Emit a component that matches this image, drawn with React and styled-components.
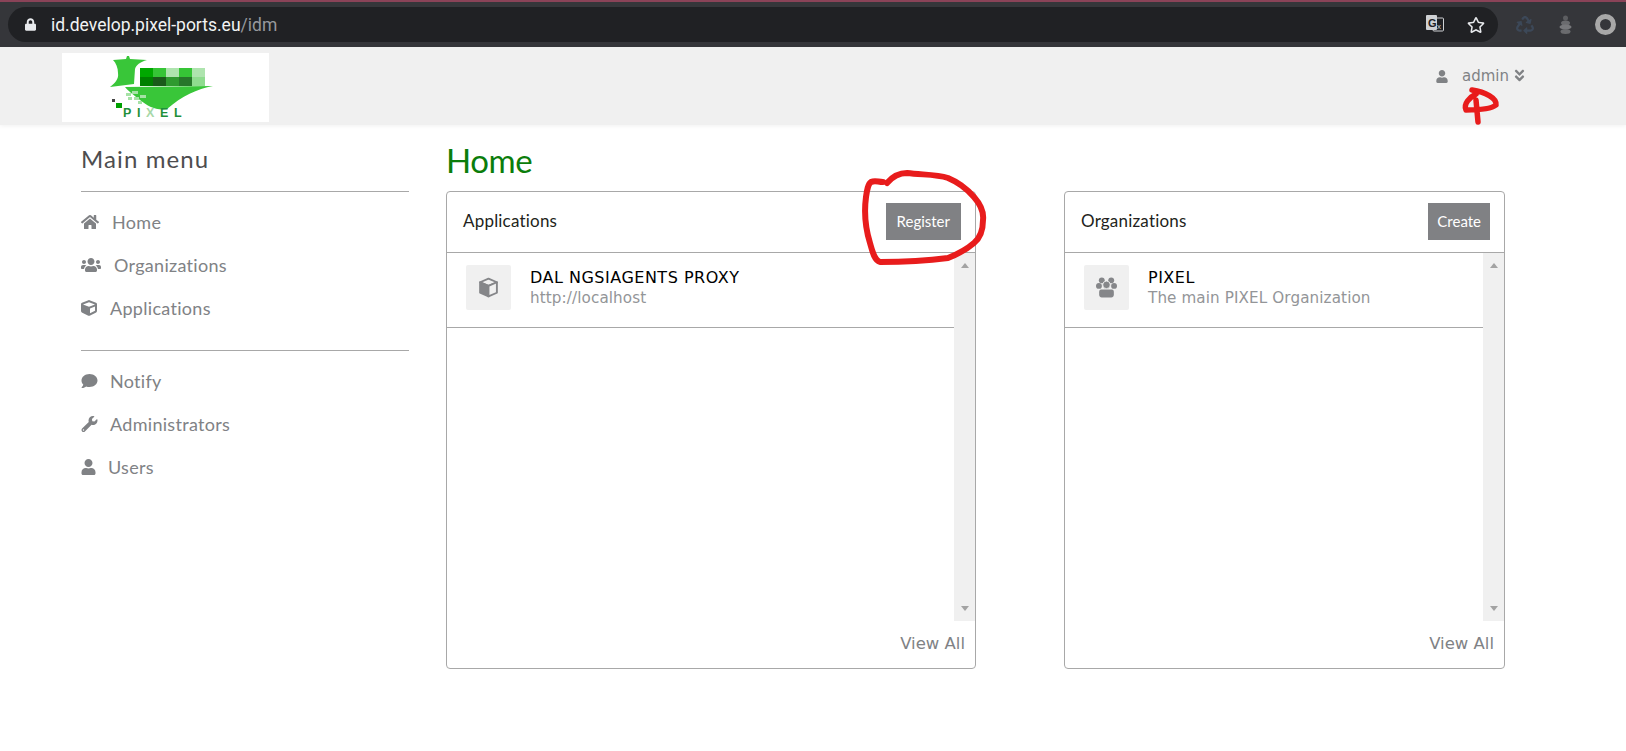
import React from 'react';
import styled, { createGlobalStyle } from 'styled-components';
import {
  FaAngleDoubleDown,
  FaComment,
  FaCube,
  FaHome,
  FaLock,
  FaRecycle,
  FaRegStar,
  FaUser,
  FaUsers,
  FaWrench,
} from 'react-icons/fa';

const GlobalStyle = createGlobalStyle`
  html, body {
    margin: 0;
    padding: 0;
    background: #fff;
    overflow: hidden;
  }
`;

const Page = styled.div`
  position: relative;
  width: 1626px;
  height: 751px;
  overflow: hidden;
  font-family: "Lato", "Liberation Sans", sans-serif;
`;

const Chrome = styled.div`
  height: 45px;
  background: #35363a;
  border-top: 2px solid #8a4358;
  display: flex;
  align-items: center;
  padding: 0 10px 0 8px;
`;

const UrlPill = styled.div`
  width: 1490px;
  height: 35px;
  box-sizing: border-box;
  background: #202124;
  border-radius: 18px;
  display: flex;
  align-items: center;
  padding: 0 13px 0 17px;
  color: #e8eaed;
  font-family: "Roboto", sans-serif;
  font-size: 17.5px;
`;

const LockIcon = styled(FaLock)`
  width: 11px;
  height: 13px;
  margin-right: 15px;
  color: #e8eaed;
`;

const Host = styled.span`
  color: #f1f3f4;
`;

const Path = styled.span`
  color: #96989c;
  flex: 1;
`;

const Translate = styled.svg`
  width: 18px;
  height: 19px;
  margin-right: 23px;
`;

const Star = styled(FaRegStar)`
  width: 18px;
  height: 18px;
  color: #e8eaed;
`;

const Extensions = styled.div`
  display: flex;
  align-items: center;
  margin-left: 18px;
`;

const Recycle = styled(FaRecycle)`
  width: 18px;
  height: 18px;
  color: #3c4858;
  margin-right: 25px;
`;

const Stack = styled.svg`
  width: 13px;
  height: 20px;
  margin-right: 23px;
`;

const Ring = styled.div`
  width: 21px;
  height: 21px;
  box-sizing: border-box;
  border: 5px solid #a8a8a8;
  border-radius: 50%;
`;

const Header = styled.header`
  height: 78px;
  box-sizing: border-box;
  background: #f0f0f0;
  box-shadow: 0 1px 4px rgba(0, 0, 0, 0.06);
  display: flex;
  align-items: flex-start;
  justify-content: space-between;
  padding: 6px 100px 0 62px;
`;

const Logo = styled.svg`
  width: 207px;
  height: 69px;
  background: #fff;
  display: block;
`;

const UserMenu = styled.div`
  display: flex;
  align-items: center;
  margin-top: 14px;
  color: #808285;
  font-family: "DejaVu Sans", sans-serif;
  font-size: 15px;
`;

const UserIcon = styled(FaUser)`
  width: 12px;
  height: 13px;
  margin-right: 14px;
`;

const Chevrons = styled(FaAngleDoubleDown)`
  width: 13px;
  height: 15px;
  margin-left: 4px;
  margin-top: -2px;
`;

const Content = styled.div`
  display: flex;
  padding: 14px 0 0 81px;
`;

const Sidebar = styled.nav`
  width: 328px;
  margin-right: 37px;
`;

const SideTitle = styled.h2`
  margin: 0;
  height: 53px;
  box-sizing: border-box;
  padding-top: 5px;
  border-bottom: 1px solid #a8a8a8;
  font-size: 24px;
  line-height: 30px;
  font-weight: 400;
  letter-spacing: 1.1px;
  color: #4d4d4f;
`;

const MenuGroup = styled.ul`
  list-style: none;
  margin: 0;
  padding: 8px 0 0;
  height: 159px;
  box-sizing: border-box;
  border-bottom: ${(p) => (p.$last ? 'none' : '1px solid #a8a8a8')};
`;

const MenuItem = styled.li`
  height: 43px;
  display: flex;
  align-items: center;
  color: #808285;
  font-size: 18px;
  letter-spacing: 0.3px;
  svg {
    width: ${(p) => p.$icon}px;
    height: 16px;
    margin-right: ${(p) => p.$gap}px;
    flex-shrink: 0;
  }
`;

const Main = styled.main`
  display: flex;
  flex-direction: column;
`;

const Title = styled.h1`
  margin: 0;
  height: 52px;
  padding-top: 1px;
  box-sizing: border-box;
  font-size: 33px;
  line-height: 40px;
  font-weight: 400;
  letter-spacing: -0.4px;
  color: #0b7d0b;
`;

const Cards = styled.div`
  display: flex;
  gap: 88px;
`;

const Card = styled.section`
  width: ${(p) => p.$width}px;
  height: 478px;
  box-sizing: border-box;
  border: 1px solid #a8a8a8;
  border-radius: 4px;
  display: flex;
  flex-direction: column;
`;

const CardHeader = styled.div`
  height: 61px;
  flex-shrink: 0;
  box-sizing: border-box;
  border-bottom: 1px solid #a8a8a8;
  display: flex;
  align-items: center;
  justify-content: space-between;
  padding: 0 14px 0 16px;
`;

const CardTitle = styled.h3`
  margin: 0 0 3px;
  font-size: 17px;
  font-weight: 400;
  letter-spacing: 0.2px;
  color: #231f20;
`;

const ActionButton = styled.button`
  height: 37px;
  margin-top: -2px;
  padding: 0 ${(p) => p.$pad}px;
  border: none;
  background: #808184;
  color: #fff;
  font-family: "Lato", sans-serif;
  font-size: 15px;
`;

const CardBody = styled.div`
  height: 368px;
  flex-shrink: 0;
  display: flex;
`;

const List = styled.div`
  flex: 1;
`;

const Row = styled.div`
  height: 75px;
  box-sizing: border-box;
  border-bottom: 1px solid #a8a8a8;
  display: flex;
  align-items: flex-start;
  padding: 12px 0 0 19px;
`;

const IconBox = styled.div`
  width: 45px;
  height: 45px;
  background: #f0f0f0;
  border-radius: 2px;
  display: flex;
  align-items: center;
  justify-content: center;
  margin-right: 19px;
`;

const BoxGlyph = styled.svg`
  width: 21px;
  height: 21px;
`;

const RowText = styled.div`
  font-family: "DejaVu Sans", sans-serif;
`;

const RowName = styled.div`
  font-size: 16px;
  line-height: 21px;
  margin-top: 2px;
  letter-spacing: 0.5px;
  font-weight: 400;
  color: #000;
`;

const RowSub = styled.div`
  font-size: 15.2px;
  line-height: 21px;
  color: #939598;
  letter-spacing: 0.1px;
`;

const Scrollbar = styled.div`
  width: 21px;
  background: #f0f0f0;
  display: flex;
  flex-direction: column;
  align-items: center;
  justify-content: space-between;
  padding: 10px 0;
  box-sizing: border-box;
`;

const ScrollArrow = styled.div`
  width: 0;
  height: 0;
  border-left: 4px solid transparent;
  border-right: 4px solid transparent;
  border-${(p) => (p.$down ? 'top' : 'bottom')}: 5px solid #a3a3a3;
`;

const CardFooter = styled.div`
  flex: 1;
  display: flex;
  justify-content: flex-end;
  padding: 13px 10px 0 0;
  font-family: "DejaVu Sans", sans-serif;
  font-size: 16.5px;
  color: #808285;
`;

const Scribble = styled.svg`
  position: absolute;
  left: 0;
  top: 0;
  width: 1626px;
  height: 751px;
  pointer-events: none;
`;

const LOGO_PIXELS = [
  ['#00a800', '#36c536', '#aee4ae', '#36c536', '#aee4ae'],
  ['#007f00', '#1a5a1a', '#2f9a2f', '#27772a', '#8fdc8f'],
];

const LOGO_SPECKS = [
  [64, 40, 5, 3],
  [70, 38, 6, 3],
  [66, 44, 4, 3],
  [72, 44, 5, 3],
  [78, 42, 6, 3],
  [76, 48, 4, 3],
];

function PixelLogo() {
  return (
    <Logo viewBox="0 0 207 69">
      <path
        d="M51 7 L64 6 L65 3 L67 3 L68 6 L85 7 C78 9 74 12 73 16 L72 31 L48 34 C53 30 57 26 56 20 C56 15 54 10 51 7 Z"
        fill="#39c639"
      />
      <path d="M63 34 L151 33 C135 36 120 43 105 56 C95 58 85 53 78 47 C72 42 66 38 63 34 Z" fill="#39c639" />
      {LOGO_SPECKS.map(([x, y, w, h]) => (
        <rect key={`${x}-${y}`} x={x} y={y} width={w} height={h} fill="#a6e2a6" />
      ))}
      {LOGO_PIXELS.map((row, y) =>
        row.map((color, x) => (
          <rect key={`${x}-${y}`} x={78 + x * 13} y={15 + y * 9} width="13" height="9" fill={color} />
        ))
      )}
      <rect x="50" y="46" width="3" height="3" fill="#444" />
      <rect x="54" y="50" width="6" height="5" fill="#00a000" />
      <text x="61" y="64" fontFamily="Liberation Sans" fontSize="12.5" fontWeight="700" letterSpacing="5.6" fill="#1f8f3a">
        PI<tspan fill="#a8d8a8">X</tspan>EL
      </text>
    </Logo>
  );
}

function TranslateIcon() {
  return (
    <Translate viewBox="0 0 18 19">
      <rect x="7" y="3" width="10.5" height="13" rx="1" fill="none" stroke="#cfd1d4" />
      <rect x="0" y="0" width="11" height="15" rx="1" fill="#cfd1d4" />
      <text x="2" y="12" fontFamily="Liberation Sans" fontSize="11" fontWeight="700" fill="#202124">G</text>
      <text x="11" y="14" fontFamily="Liberation Sans" fontSize="8" fill="#cfd1d4">x</text>
    </Translate>
  );
}

function CubeGlyph() {
  return (
    <BoxGlyph viewBox="0 0 20 20" strokeLinejoin="round">
      <path d="M10 1.5 L18 5 L10 8.5 L2 5 Z" fill="#f0f0f0" stroke="#858689" strokeWidth="1.8" />
      <path d="M2 5 L10 8.5 V18.5 L2 15 Z" fill="#858689" stroke="#858689" strokeWidth="1.8" />
      <path d="M18 5 L10 8.5 V18.5 L18 15 Z" fill="#f0f0f0" stroke="#858689" strokeWidth="1.8" />
    </BoxGlyph>
  );
}

function GroupGlyph() {
  return (
    <BoxGlyph viewBox="0 0 20 20" fill="#858689">
      <circle cx="5.5" cy="3.2" r="2.8" />
      <circle cx="14.5" cy="3.2" r="2.8" />
      <circle cx="2.8" cy="8.5" r="2.8" />
      <circle cx="17.2" cy="8.5" r="2.8" />
      <circle cx="10" cy="7.5" r="3.6" stroke="#f0f0f0" strokeWidth="0.8" />
      <path d="M5 12 H15 C16.5 12 17 13 17 14.5 V17 C17 18.6 16 19.5 14.5 19.5 H5.5 C4 19.5 3 18.6 3 17 V14.5 C3 13 3.5 12 5 12 Z" />
    </BoxGlyph>
  );
}

function CardPanel({ width, title, action, pad, icon, name, sub }) {
  return (
    <Card $width={width}>
      <CardHeader>
        <CardTitle>{title}</CardTitle>
        <ActionButton $pad={pad}>{action}</ActionButton>
      </CardHeader>
      <CardBody>
        <List>
          <Row>
            <IconBox>{icon}</IconBox>
            <RowText>
              <RowName>{name}</RowName>
              <RowSub>{sub}</RowSub>
            </RowText>
          </Row>
        </List>
        <Scrollbar>
          <ScrollArrow />
          <ScrollArrow $down />
        </Scrollbar>
      </CardBody>
      <CardFooter>View All</CardFooter>
    </Card>
  );
}

export default function App() {
  return (
    <Page>
      <GlobalStyle />
      <Chrome>
        <UrlPill>
          <LockIcon />
          <Host>id.develop.pixel-ports.eu</Host>
          <Path>/idm</Path>
          <TranslateIcon />
          <Star />
        </UrlPill>
        <Extensions>
          <Recycle />
          <Stack viewBox="0 0 13 20">
            <circle cx="6.5" cy="3" r="2.5" fill="#5c5d60" />
            <ellipse cx="6.5" cy="8" rx="4.5" ry="2.5" fill="#6a6b6e" />
            <ellipse cx="6.5" cy="12" rx="6" ry="2.5" fill="#77787b" />
            <ellipse cx="6.5" cy="16.5" rx="5" ry="2.5" fill="#6a6b6e" />
          </Stack>
          <Ring />
        </Extensions>
      </Chrome>
      <Header>
        <PixelLogo />
        <UserMenu>
          <UserIcon />
          admin
          <Chevrons />
        </UserMenu>
      </Header>
      <Content>
        <Sidebar>
          <SideTitle>Main menu</SideTitle>
          <MenuGroup>
            <MenuItem $icon={18} $gap={13}><FaHome />Home</MenuItem>
            <MenuItem $icon={20} $gap={13}><FaUsers />Organizations</MenuItem>
            <MenuItem $icon={16} $gap={13}><FaCube />Applications</MenuItem>
          </MenuGroup>
          <MenuGroup $last>
            <MenuItem $icon={17} $gap={12}><FaComment />Notify</MenuItem>
            <MenuItem $icon={17} $gap={12}><FaWrench />Administrators</MenuItem>
            <MenuItem $icon={15} $gap={12}><FaUser />Users</MenuItem>
          </MenuGroup>
        </Sidebar>
        <Main>
          <Title>Home</Title>
          <Cards>
            <CardPanel
              width={530}
              title="Applications"
              action="Register"
              pad={11}
              icon={<CubeGlyph />}
              name="DAL NGSIAGENTS PROXY"
              sub="http://localhost"
            />
            <CardPanel
              width={441}
              title="Organizations"
              action="Create"
              pad={9}
              icon={<GroupGlyph />}
              name="PIXEL"
              sub="The main PIXEL Organization"
            />
          </Cards>
        </Main>
      </Content>
      <Scribble viewBox="0 0 1626 751" fill="none" stroke="#e81c1c" strokeLinecap="round" strokeLinejoin="round">
        <path
          strokeWidth="6"
          d="M887 183 C893 176 900 173 907 173 C922 175 936 174 948 178 C960 183 968 190 974 197 C981 205 984 212 983 220 C983 231 980 238 974 243 C966 250 958 254 948 258 C925 261 900 262 880 262 C874 260 872 250 870 243 C866 230 864 212 866 197 C867 190 868 184 871 182 C875 180 878 182 883 182"
        />
        <path
          strokeWidth="5.5"
          d="M1472 90 C1485 92 1497 98 1496 105 C1490 110 1475 110 1466 110 C1463 104 1470 97 1476 94 M1476 100 L1478 122"
        />
      </Scribble>
    </Page>
  );
}
